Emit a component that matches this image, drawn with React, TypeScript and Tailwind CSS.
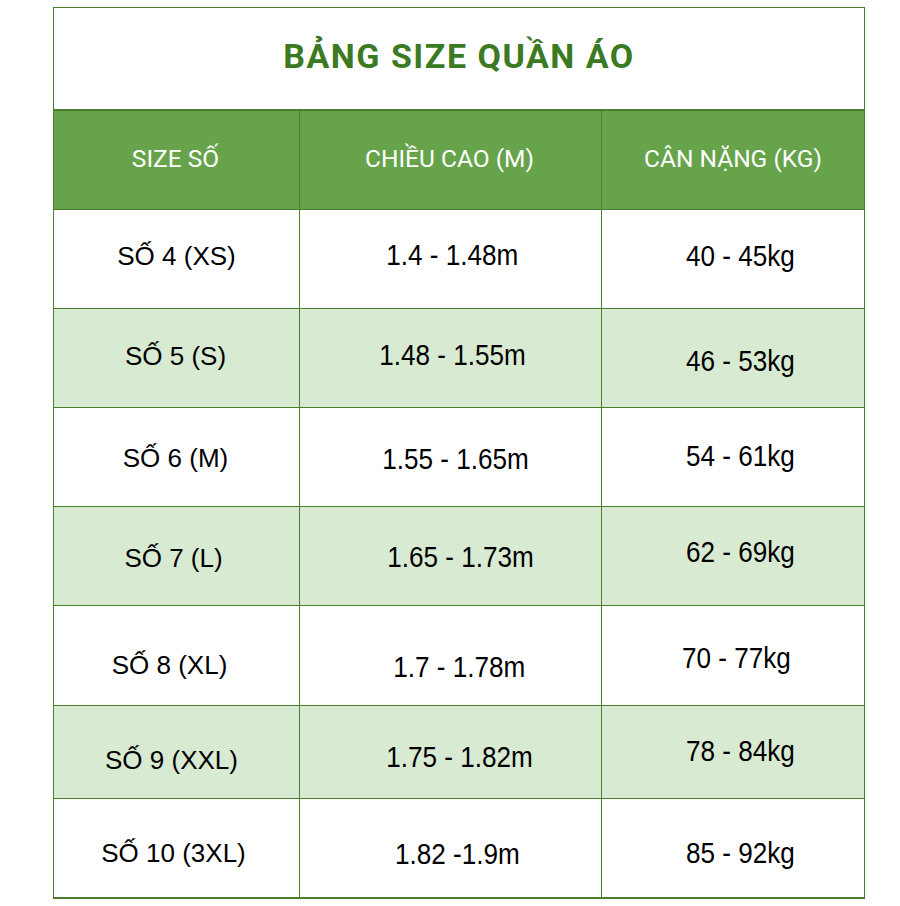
import React from 'react';

// per-cell padding nudges the text so it sits where the picture has it
const rows = [
  {
    size: 'SỐ 4 (XS)', height: '1.4 - 1.48m', weight: '40 - 45kg', h: 'h-[99px]', alt: false,
    c1: 'pb-[6px]', c2: 'pl-[4px] pb-[6px]', c3: 'pl-[14px] pb-[4px]',
  },
  {
    size: 'SỐ 5 (S)', height: '1.48 - 1.55m', weight: '46 - 53kg', h: 'h-[99px]', alt: true,
    c1: 'pr-[2px] pb-[4px]', c2: 'pl-[4px] pb-[4px]', c3: 'pl-[14px] pt-[8px]',
  },
  {
    size: 'SỐ 6 (M)', height: '1.55 - 1.65m', weight: '54 - 61kg', h: 'h-[99px]', alt: false,
    c1: 'pr-[2px] pt-[2px]', c2: 'pl-[10px] pt-[6px]', c3: 'pl-[14px]',
  },
  {
    size: 'SỐ 7 (L)', height: '1.65 - 1.73m', weight: '62 - 69kg', h: 'h-[99px]', alt: true,
    c1: 'pr-[6px] pt-[4px]', c2: 'pl-[20px] pt-[4px]', c3: 'pl-[14px] pb-[6px]',
  },
  {
    size: 'SỐ 8 (XL)', height: '1.7 - 1.78m', weight: '70 - 77kg', h: 'h-[100px]', alt: false,
    c1: 'pr-[14px] pt-[20px]', c2: 'pl-[18px] pt-[24px]', c3: 'pl-[6px] pt-[6px]',
  },
  {
    size: 'SỐ 9 (XXL)', height: '1.75 - 1.82m', weight: '78 - 84kg', h: 'h-[93px]', alt: true,
    c1: 'pr-[10px] pt-[16px]', c2: 'pl-[18px] pt-[12px]', c3: 'pl-[14px]',
  },
  {
    size: 'SỐ 10 (3XL)', height: '1.82 -1.9m', weight: '85 - 92kg', h: 'h-[99px]', alt: false,
    c1: 'pr-[6px] pt-[10px]', c2: 'pl-[14px] pt-[14px]', c3: 'pl-[14px] pt-[12px]',
  },
];

const narrow = "inline-block scale-x-[0.9] font-['Liberation_Sans',Arial,sans-serif] text-[29px] text-black";

const App = () => {
  return (
    <div className="w-[900px] h-[906px] bg-white overflow-hidden pt-[7px]">
      <div className="ml-[53px] w-[812px] border-x border-t border-b-2 border-[#4b7f2c]">
        <div className="h-[101px] flex items-center justify-center pb-[4px]">
          <h1 className="font-['Roboto',sans-serif] font-bold text-[34px] text-[#3b7a22] tracking-[1.5px]">
            BẢNG SIZE QUẦN ÁO
          </h1>
        </div>
        <div className="grid grid-cols-[245px_302px_1fr] h-[100px] bg-[#66a34b] border-t-2 border-[#4b7f2c] font-['Roboto',sans-serif] text-[24.5px] text-white">
          <div className="flex items-center justify-center pb-[2px] pr-[2px]">SIZE SỐ</div>
          <div className="flex items-center justify-center border-l border-[#4b7f2c] pb-[2px] pr-[2px]">CHIỀU CAO (M)</div>
          <div className="flex items-center justify-center border-l border-[#4b7f2c] pb-[2px]">CÂN NẶNG (KG)</div>
        </div>
        {rows.map((r) => (
          <div
            key={r.size}
            className={`grid grid-cols-[245px_302px_1fr] ${r.h} border-t border-[#4b7f2c] ${r.alt ? 'bg-[#d9ead3]' : 'bg-white'}`}
          >
            <div className={`flex items-center justify-center font-['Liberation_Sans',Arial,sans-serif] text-[26px] text-black ${r.c1}`}>
              {r.size}
            </div>
            <div className={`flex items-center justify-center border-l border-[#4b7f2c] ${r.c2}`}>
              <span className={narrow}>{r.height}</span>
            </div>
            <div className={`flex items-center justify-center border-l border-[#4b7f2c] ${r.c3}`}>
              <span className={narrow}>{r.weight}</span>
            </div>
          </div>
        ))}
      </div>
    </div>
  );
};

export default App;
